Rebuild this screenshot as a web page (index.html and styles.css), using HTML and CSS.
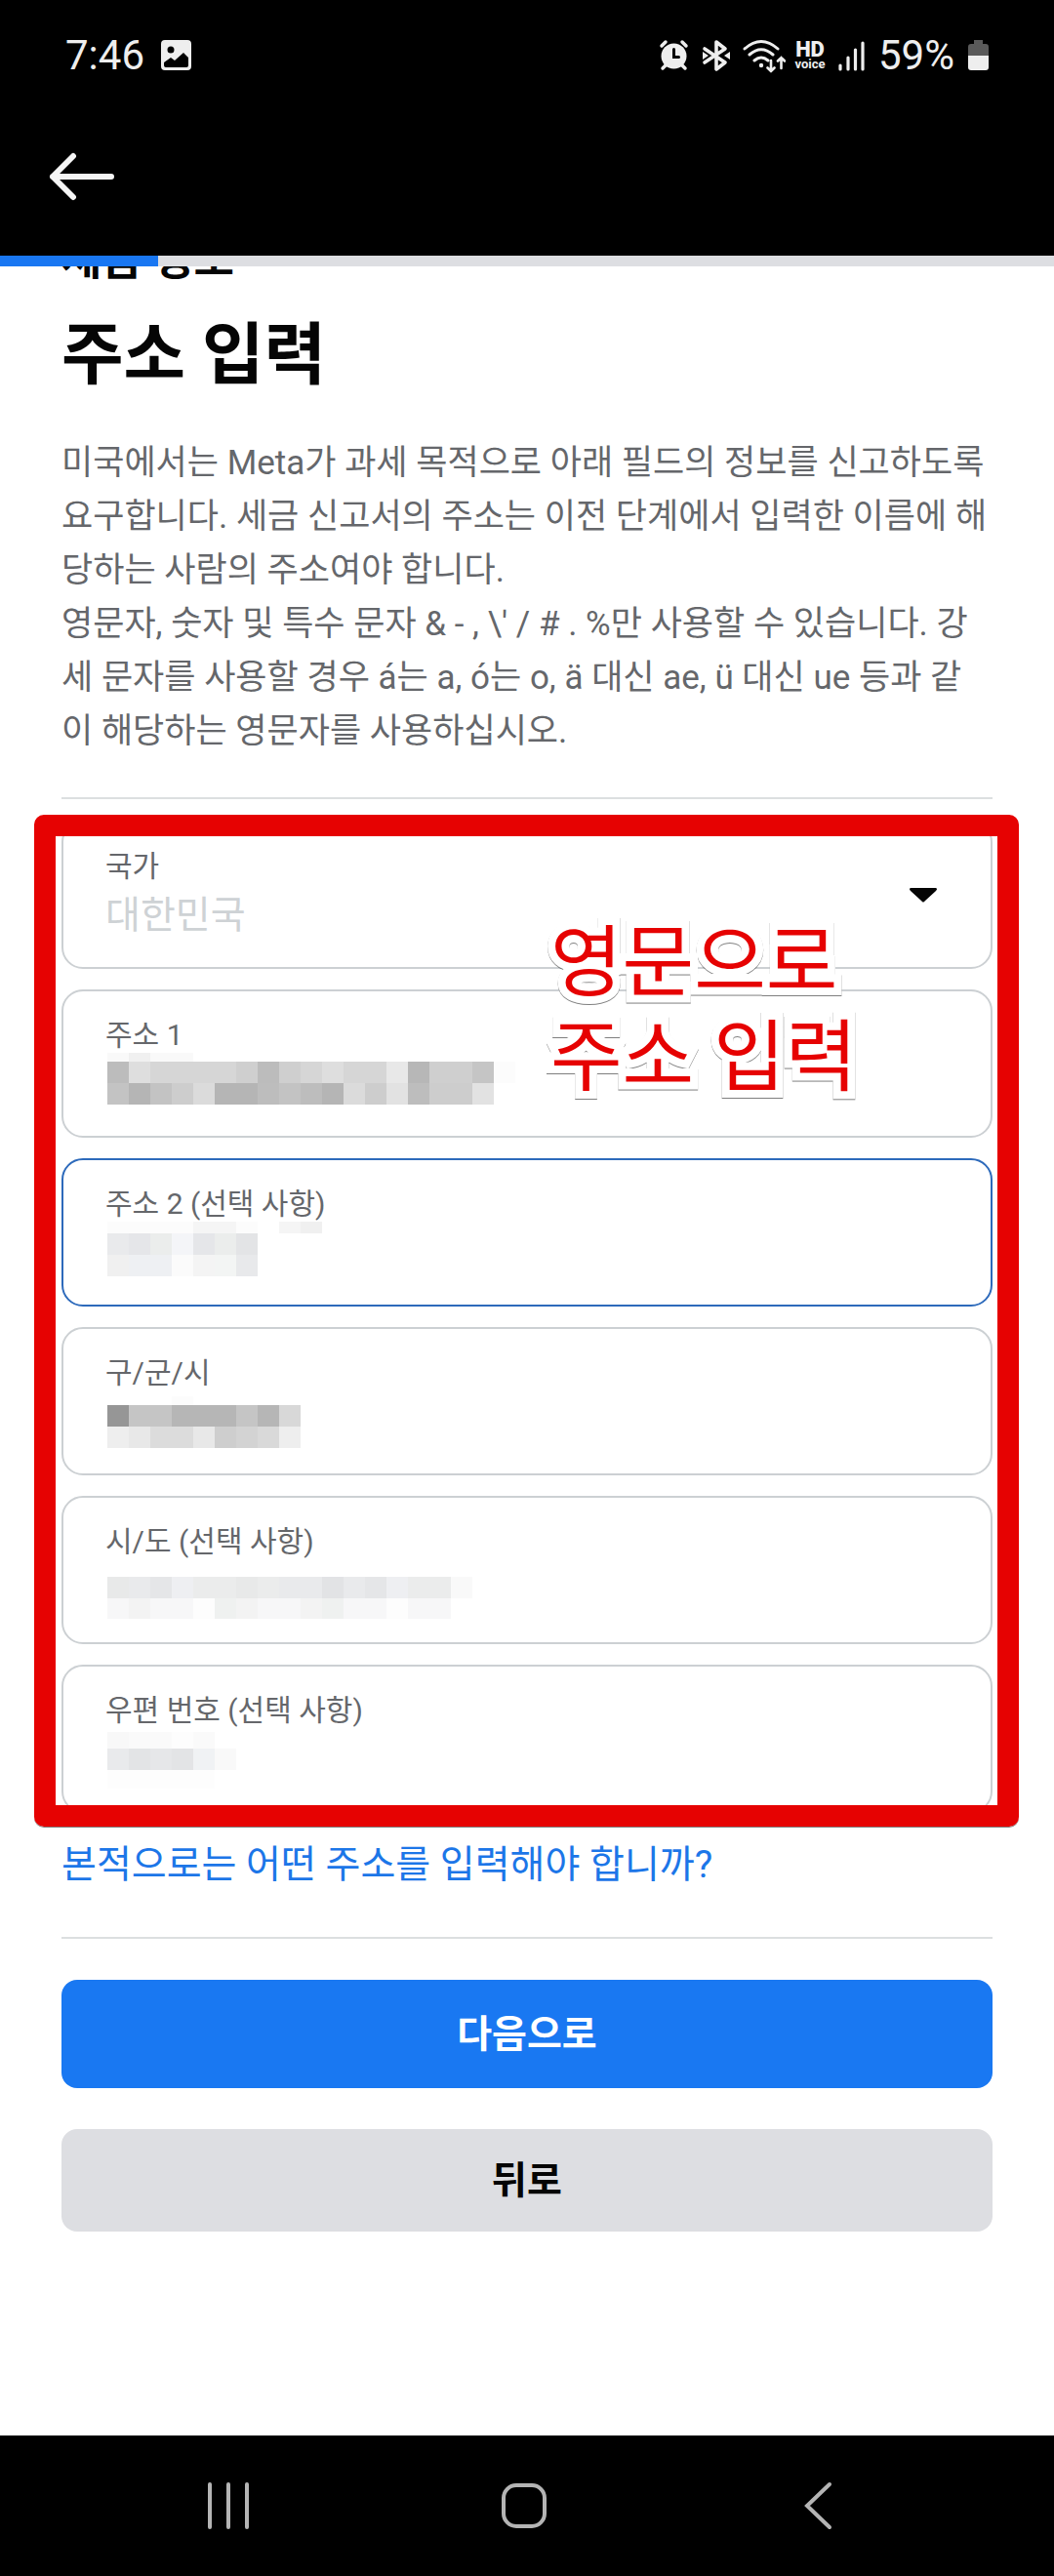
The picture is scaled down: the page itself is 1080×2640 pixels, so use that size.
FILE: index.html
```html
<!DOCTYPE html>
<html lang="ko">
<head>
<meta charset="utf-8">
<meta name="viewport" content="width=device-width, initial-scale=1">
<title>주소 입력</title>
<link rel="stylesheet" href="styles.css">
</head>
<body>
<header class="top">
  <div class="status">
    <div class="status-group status-left">
      <span class="status-text">7:46</span>
      <svg width="32" height="32" viewBox="0 0 32 32" aria-hidden="true"><path fill="#eee" fill-rule="evenodd" d="M4 0h23a4 4 0 0 1 4 4v23a4 4 0 0 1-4 4H4a4 4 0 0 1-4-4V4a4 4 0 0 1 4-4zM10 6.500a3.500 3.500 0 1 0 0 7 3.500 3.500 0 0 0 0-7zM3 23v3q0 2 2 2h21q2 0 2-2V18l-5-5-9 8-4-3z"/></svg>
    </div>
    <div class="status-group status-right">
      <svg width="34" height="34" viewBox="0 0 34 34" aria-hidden="true"><g fill="none" stroke="#eee" stroke-width="3.500" stroke-linecap="round"><path d="M3 7l4-4M28 7l-4-4M7 27l-3 3M24 27l3 3"/></g><circle cx="15.500" cy="17.500" r="13" fill="#eee"/><path d="M15.500 10.500v8h5" fill="none" stroke="#000" stroke-width="3" stroke-linecap="round"/></svg>
      <svg width="34" height="34" viewBox="0 0 34 34" aria-hidden="true"><path d="M5 10l21 14-9 7V3l9 7L5 24" fill="none" stroke="#eee" stroke-width="3.600" stroke-linejoin="round" stroke-linecap="round"/><path d="M3 13l6 4-6 4zM31 13l-6 4 6 4z" fill="#eee"/></svg>
      <svg width="46" height="36" viewBox="0 0 46 36" aria-hidden="true"><g fill="none" stroke="#eee" stroke-width="3" stroke-linecap="round"><path d="M4 11q17-15 34 0M9 17q12-10.500 24 0M14 23q7-6 14 0"/><path d="M31 23v11M27.500 30.500L31 34l3.500-3.500M41.500 31V20M38 23.500l3.500-3.500 3.500 3.500" stroke-width="2.600"/></g><circle cx="21" cy="28" r="2.200" fill="#eee"/></svg>
      <span class="hd"><b>HD</b><span>voice</span></span>
      <svg width="37" height="32" viewBox="0 0 37 32" aria-hidden="true"><path d="M6 26v4M14 18v12M21.500 10v20M29 3v27" stroke="#eee" stroke-width="3.200" stroke-linecap="round"/></svg>
      <span class="status-text battery-text">59%</span>
      <svg width="21" height="32" viewBox="0 0 21 32" aria-hidden="true"><path d="M6 0h9v4h3q3 0 3 3v9H0V7q0-3 3-3h3z" fill="#5a5a5a"/><path d="M0 16h21v12q0 3-3 3H3q-3 0-3-3z" fill="#eee"/></svg>
    </div>
  </div>
  <button class="icon-button" type="button" aria-label="뒤로 가기">
    <svg width="68" height="50" viewBox="0 0 68 50" aria-hidden="true"><path d="M64 25H4M25 4L4 25l21 21" fill="none" stroke="#f5f5f5" stroke-width="6" stroke-linecap="round" stroke-linejoin="round"/></svg>
  </button>
</header>
<div class="progress" role="progressbar" aria-label="진행률" aria-valuenow="15" aria-valuemin="0" aria-valuemax="100"><div class="progress-value" style="width:15%"></div></div>
<main class="content">
  <p class="eyebrow">세금 정보</p>
  <h1>주소 입력</h1>
  <p class="description">미국에서는 Meta가 과세 목적으로 아래 필드의 정보를 신고하도록 요구합니다. 세금 신고서의 주소는 이전 단계에서 입력한 이름에 해당하는 사람의 주소여야 합니다.<br>영문자, 숫자 및 특수 문자 &amp; - , \' / # . %만 사용할 수 있습니다. 강세 문자를 사용할 경우 á는 a, ó는 o, ä 대신 ae, ü 대신 ue 등과 같이 해당하는 영문자를 사용하십시오.</p>
  <hr>
  <form>
    <div class="fields">
      <div class="field">
        <label for="country">국가</label>
        <select id="country" disabled><option>대한민국</option></select>
        <svg class="caret" width="28" height="15" viewBox="0 0 28 15" aria-hidden="true"><path d="M1 0h26q2 1 0 3L15 14q-1 1-2 0L1 3q-2-2 0-3z" fill="#050505"/></svg>
      </div>
      <div class="field">
        <label for="addr1">주소 1</label>
        <input id="addr1" type="text">
        <svg class="mosaic" width="480" height="148" viewBox="0 0 480 148" shape-rendering="crispEdges" aria-hidden="true">
          <path fill="#f9f9f9" d="M45 63h88v9H45z"/><path fill="#f0f0f0" d="M67 63h22v9H67z"/>
          <path fill="#d6d6d6" d="M45 72h396v22H45z"/><path fill="#bcbcbc" d="M45 72h22v22H45zM199 72h22v22h-22z"/><path fill="#dedede" d="M67 72h22v22H67zM265 72h22v22h-22z"/><path fill="#cfcfcf" d="M177 72h22v22h-22zM221 72h22v22h-22zM375 72h44v22h-44z"/><path fill="#e8e8e8" d="M331 72h22v22h-22z"/><path fill="#b7b7b7" d="M353 72h22v22h-22z"/><path fill="#c5c5c5" d="M419 72h22v22h-22z"/><path fill="#fcfcfc" d="M441 72h22v22h-22z"/>
          <path fill="#c3c3c3" d="M45 94h396v22H45z"/><path fill="#b5b5b5" d="M67 94h22v22H67zM155 94h44v22h-44zM265 94h22v22h-22z"/><path fill="#cdcdcd" d="M111 94h22v22h-22zM309 94h22v22h-22zM375 94h44v22h-44z"/><path fill="#dbdbdb" d="M133 94h22v22h-22zM287 94h22v22h-22z"/><path fill="#bdbdbd" d="M199 94h22v22h-22zM243 94h22v22h-22zM353 94h22v22h-22z"/><path fill="#e2e2e2" d="M331 94h22v22h-22zM419 94h22v22h-22z"/>
        </svg>
      </div>
      <div class="field field-active">
        <label for="addr2">주소 2 (선택 사항)</label>
        <input id="addr2" type="text">
        <svg class="mosaic" width="480" height="148" viewBox="0 0 480 148" shape-rendering="crispEdges" aria-hidden="true">
          <path fill="#fcfcfc" d="M45 63h88v12H45zM177 63h22v12h-22z"/><path fill="#f5f5f5" d="M133 63h44v12h-44zM221 63h22v12h-22z"/><path fill="#f0f0f0" d="M243 63h22v12h-22z"/>
          <path fill="#e9eaec" d="M45 75h22v22H45z"/><path fill="#e5e6e9" d="M67 75h22v22H67zM133 75h22v22h-22z"/><path fill="#ebedec" d="M89 75h22v22H89zM155 75h22v22h-22z"/><path fill="#f4f5f8" d="M111 75h22v22h-22z"/><path fill="#e3e4e6" d="M177 75h22v22h-22z"/>
          <path fill="#f0f0f0" d="M45 97h22v22H45z"/><path fill="#eef0f3" d="M67 97h44v22H67z"/><path fill="#fbfbfb" d="M111 97h22v22h-22z"/><path fill="#f4f4f4" d="M133 97h22v22h-22z"/><path fill="#f3f5f4" d="M155 97h22v22h-22z"/><path fill="#e8e9eb" d="M177 97h22v22h-22z"/>
        </svg>
      </div>
      <div class="field">
        <label for="city">구/군/시</label>
        <input id="city" type="text">
        <svg class="mosaic" width="480" height="148" viewBox="0 0 480 148" shape-rendering="crispEdges" aria-hidden="true">
          <path fill="#fcfcfc" d="M111 69h22v9h-22z"/>
          <path fill="#969696" d="M45 78h22v22H45z"/><path fill="#c5c5c5" d="M67 78h44v22H67zM177 78h22v22h-22z"/><path fill="#b6b6b6" d="M111 78h66v22h-66zM199 78h22v22h-22z"/><path fill="#d8d8d8" d="M221 78h22v22h-22z"/>
          <path fill="#eee" d="M45 100h22v22H45zM221 100h22v22h-22z"/><path fill="#e8e8e8" d="M67 100h22v22H67zM133 100h22v22h-22z"/><path fill="#dcdcdc" d="M89 100h44v22H89z"/><path fill="#cecece" d="M155 100h22v22h-22z"/><path fill="#d3d3d3" d="M177 100h22v22h-22z"/><path fill="#d9d9d9" d="M199 100h22v22h-22z"/>
        </svg>
      </div>
      <div class="field">
        <label for="state">시/도 (선택 사항)</label>
        <input id="state" type="text">
        <svg class="mosaic" width="480" height="148" viewBox="0 0 480 148" shape-rendering="crispEdges" aria-hidden="true">
          <path fill="#e9eaec" d="M45 81h352v22H45z"/><path fill="#e8e9e9" d="M45 81h22v22H45zM177 81h22v22h-22z"/><path fill="#e5e6e8" d="M89 81h22v22H89zM309 81h22v22h-22z"/><path fill="#eeeff2" d="M111 81h22v22h-22zM331 81h22v22h-22z"/><path fill="#ebecec" d="M133 81h44v22h-44zM199 81h22v22h-22zM353 81h44v22h-44z"/><path fill="#e2e3e5" d="M265 81h22v22h-22z"/><path fill="#f9f9f9" d="M397 81h22v22h-22z"/>
          <path fill="#f7f7f8" d="M45 103h88v21H45zM199 103h44v21h-44zM287 103h44v21h-44zM353 103h44v21h-44z"/><path fill="#f3f3f3" d="M67 103h22v21H67zM177 103h22v21h-22zM243 103h22v21h-22z"/><path fill="#eff1f0" d="M155 103h22v21h-22zM265 103h22v21h-22z"/><path fill="#fdfdfd" d="M133 103h22v21h-22zM331 103h22v21h-22z"/>
        </svg>
      </div>
      <div class="field">
        <label for="zip">우편 번호 (선택 사항)</label>
        <input id="zip" type="text">
        <svg class="mosaic" width="480" height="148" viewBox="0 0 480 148" shape-rendering="crispEdges" aria-hidden="true">
          <path fill="#fafafa" d="M67 67h44v17H67zM133 67h22v17h-22z"/><path fill="#f8f8f8" d="M45 67h22v17H45z"/><path fill="#fdfdfd" d="M111 67h22v17h-22zM45 106h110v19H45z"/>
          <path fill="#e9eaec" d="M45 84h22v22H45z"/><path fill="#e3e4e6" d="M67 84h66v22H67z"/><path fill="#e6e7e9" d="M89 84h22v22H89z"/><path fill="#f0f2f4" d="M133 84h22v22h-22z"/><path fill="#f9f9f9" d="M155 84h22v22h-22z"/>
        </svg>
      </div>
      <div class="highlight" aria-hidden="true"></div>
      <p class="note">영문으로<br>주소 입력</p>
    </div>
    <a class="help" href="#help">본적으로는 어떤 주소를 입력해야 합니까?</a>
    <hr>
    <div class="actions">
      <button class="button primary" type="submit">다음으로</button>
      <button class="button secondary" type="button">뒤로</button>
    </div>
  </form>
</main>
<nav class="system-nav" aria-label="시스템 탐색">
  <button type="button" aria-label="최근 앱"><svg width="48" height="52" viewBox="0 0 48 52"><path d="M5 4v44M24 4v44M43 4v44" stroke="#b4b4b4" stroke-width="4" stroke-linecap="round"/></svg></button>
  <button type="button" aria-label="홈"><svg width="48" height="52" viewBox="0 0 48 52"><rect x="3" y="5" width="42" height="42" rx="13" fill="none" stroke="#b4b4b4" stroke-width="4"/></svg></button>
  <button type="button" aria-label="뒤로"><svg width="48" height="52" viewBox="0 0 48 52"><path d="M35 4L12 26l23 22" fill="none" stroke="#b4b4b4" stroke-width="4" stroke-linecap="round"/></svg></button>
</nav>
</body>
</html>
```
FILE: styles.css
```css
* {
  box-sizing: border-box;
}

body {
  margin: 0;
  min-height: 100vh;
  display: flex;
  flex-direction: column;
  background: #fff;
  color: #050505;
  font-family: Roboto, "Noto Sans CJK KR", sans-serif;
}

h1,
p {
  margin: 0;
}

button,
input,
select {
  margin: 0;
  padding: 0;
  border: 0;
  background: none;
  font-family: inherit;
}

svg {
  display: block;
  flex: none;
}

/* Status bar and app bar */
.top {
  background: #000;
  color: #eee;
  padding-bottom: 56px;
}

.status {
  display: flex;
  justify-content: space-between;
  align-items: center;
  height: 114px;
  padding: 0 67px;
}

.status-group {
  display: flex;
  align-items: center;
}

.status-left {
  gap: 17px;
}

.status-right {
  gap: 8px;
}

.status-text {
  font-size: 42px;
  line-height: 48px;
}

.battery-text {
  min-width: 84px;
}

.hd {
  display: flex;
  flex-direction: column;
  align-items: center;
  width: 34px;
  font-weight: 700;
}

.hd b {
  font-size: 22px;
  line-height: 18px;
}

.hd span {
  font-size: 13px;
  line-height: 12px;
}

.icon-button {
  display: block;
  margin: 42px 0 0 50px;
}

.progress {
  height: 11px;
  background: #dddee2;
}

.progress-value {
  height: 100%;
  background: #1977f2;
}

/* Page content, scrolled under the progress bar */
.content {
  flex: 1;
  padding: 0 63px 42px;
  overflow: hidden;
}

.eyebrow {
  margin-top: -33px;
  font-size: 45px;
  line-height: 54px;
  font-weight: 700;
}

h1 {
  margin-top: 31px;
  font-size: 69px;
  line-height: 80px;
  font-weight: 700;
}

.description {
  margin-top: 42px;
  color: #65676b;
  font-size: 35px;
  line-height: 55px;
}

hr {
  height: 2px;
  margin: 40px 0 0;
  border: 0;
  background: #dcdfe0;
}

.fields {
  position: relative;
  display: flex;
  flex-direction: column;
  gap: 21px;
  margin-top: 22px;
}

.field {
  position: relative;
  display: flex;
  flex-direction: column;
  height: 152px;
  padding: 25px 43px 0;
  border: 2px solid #ccd0d3;
  border-radius: 22px;
}

.field-active {
  border-color: #2d6abb;
}

.field label {
  color: #65676b;
  font-size: 30px;
  line-height: 40px;
}

.field input,
.field select {
  width: 100%;
  height: 60px;
  color: #050505;
  font-size: 39px;
  line-height: 60px;
  outline: 0;
}

.field select {
  appearance: none;
  color: #ced2d5;
  opacity: 1;
}

.mosaic {
  position: absolute;
  top: 0;
  left: 0;
  pointer-events: none;
}

.caret {
  position: absolute;
  top: 67px;
  right: 55px;
}

/* Annotation over the form */
.highlight {
  position: absolute;
  inset: -6px -27px -14px -28px;
  border: 22px solid #e60202;
  border-radius: 10px;
  box-shadow: 0 1px 0 rgba(0, 0, 0, 0.5);
  pointer-events: none;
}

.note {
  position: absolute;
  top: 98px;
  left: 501px;
  color: #e60202;
  font-size: 80px;
  line-height: 97px;
  white-space: nowrap;
  -webkit-text-stroke: 16px #fff;
  paint-order: stroke fill;
  stroke-linejoin: round;
  filter: drop-shadow(0 1px 0 rgba(0, 0, 0, 0.5));
  pointer-events: none;
}

.help {
  display: block;
  margin-top: 26px;
  color: #1c76e8;
  font-size: 39px;
  line-height: 54px;
  text-decoration: none;
}

.help + hr {
  margin-top: 47px;
}

.actions {
  display: flex;
  flex-direction: column;
  gap: 42px;
  margin-top: 42px;
}

.button {
  border-radius: 16px;
  font-size: 39px;
  line-height: 54px;
  font-weight: 700;
}

.primary {
  height: 111px;
  background: #1978f2;
  color: #fff;
}

.secondary {
  height: 105px;
  background: #dddee2;
  color: #050505;
}

/* Android navigation bar */
.system-nav {
  display: flex;
  justify-content: space-between;
  align-items: center;
  height: 144px;
  padding: 0 217px 0 210px;
  background: #000;
}
```
